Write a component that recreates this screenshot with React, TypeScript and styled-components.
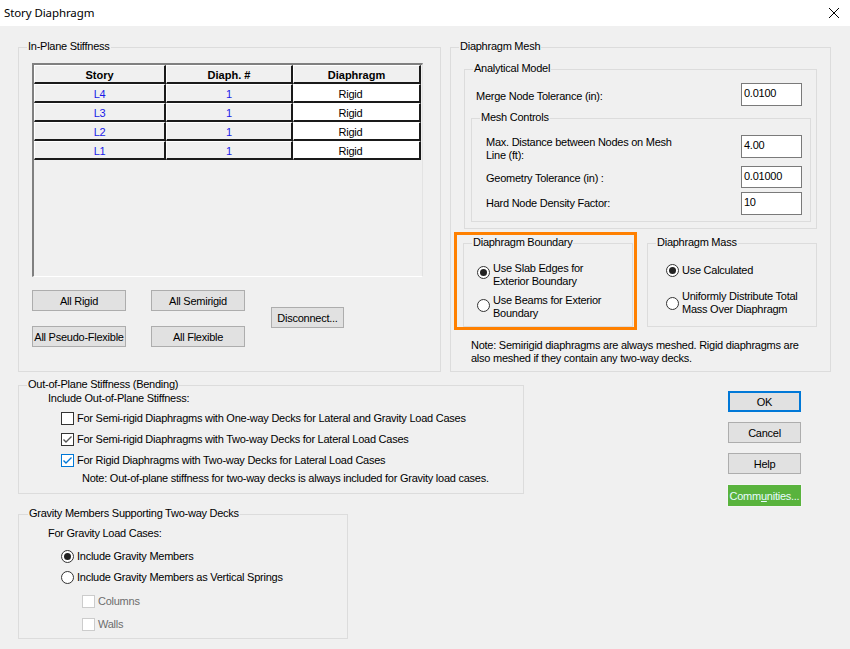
import React from "react";
import styled, { createGlobalStyle } from "styled-components";

const GlobalStyle = createGlobalStyle`
  html, body {
    margin: 0;
    padding: 0;
    background: #f0f0f0;
  }
  body {
    font-family: "Liberation Sans", Arial, sans-serif;
    font-size: 11px;
    letter-spacing: -0.25px;
    color: #000;
  }
`;

const Window = styled.div`
  width: 850px;
  height: 649px;
  background: #f0f0f0;
  overflow: hidden;
  box-sizing: border-box;
`;

const TitleBar = styled.div`
  height: 26px;
  background: #fff;
  display: flex;
  align-items: center;
  justify-content: space-between;
  padding: 0 10px 0 4px;
`;

const Title = styled.span`
  font-family: "Noto Sans", "Open Sans", sans-serif;
  font-size: 11.5px;
  letter-spacing: -0.1px;
  margin-top: -1px;
`;

const CloseIcon = styled.svg`
  width: 12px;
  height: 12px;
`;

const Body = styled.div`
  padding-left: 18px;
`;

const TopRow = styled.div`
  display: flex;
  gap: 9px;
  margin-top: 21px;
`;

const Group = styled.div<{ $w: number; $h: number }>`
  position: relative;
  width: ${(p) => p.$w}px;
  height: ${(p) => p.$h}px;
  border: 1px solid #dcdcdc;
  box-sizing: border-box;
  flex-shrink: 0;
`;

const Legend = styled.span<{ $left?: number }>`
  position: absolute;
  top: -8px;
  left: ${(p) => p.$left ?? 8}px;
  padding: 0 1px;
  background: #f0f0f0;
  line-height: 13px;
  white-space: nowrap;
`;

/* ---------- grid ---------- */

const Grid = styled.div`
  margin: 15px 0 0 13px;
  width: 391px;
  height: 214px;
  box-sizing: border-box;
  border-left: 2px solid #808080;
  border-top: 2px solid #808080;
  border-right: 1px solid #e3e3e3;
  border-bottom: 1px solid #fff;
`;

const GridRow = styled.div`
  display: grid;
  grid-template-columns: 132px 127px 128px;
  height: 19px;
`;

const Cell = styled.div<{ $kind: "head" | "label" | "value" }>`
  box-sizing: border-box;
  display: flex;
  align-items: center;
  justify-content: center;
  border-top: 1px solid #fff;
  border-left: 1px solid #fff;
  border-right: 2px solid #1a1a1a;
  border-bottom: 2px solid #1a1a1a;
  background: ${(p) => (p.$kind === "value" ? "#fff" : "#f0f0f0")};
  color: ${(p) => (p.$kind === "label" ? "#1a1ae8" : "#000")};
  font-weight: ${(p) => (p.$kind === "head" ? "bold" : "normal")};
  letter-spacing: ${(p) => (p.$kind === "head" ? "0" : "-0.25px")};
  padding-right: ${(p) => (p.$kind === "value" ? "12px" : "0")};
  padding-top: 1px;
`;

const ButtonArea = styled.div`
  display: flex;
  margin: 13px 0 0 13px;
`;

const ButtonColumn = styled.div<{ $ml?: number; $mt?: number }>`
  display: flex;
  flex-direction: column;
  gap: 15px;
  margin-left: ${(p) => p.$ml ?? 0}px;
  margin-top: ${(p) => p.$mt ?? 0}px;
`;

const Button = styled.button<{ $w: number; $h?: number; $variant?: "default" | "green" }>`
  width: ${(p) => p.$w}px;
  height: ${(p) => p.$h ?? 21}px;
  box-sizing: border-box;
  padding: 0;
  font-family: "Liberation Sans", Arial, sans-serif;
  font-size: 11px;
  letter-spacing: -0.25px;
  color: ${(p) => (p.$variant === "green" ? "#e8fbff" : "#000")};
  background: ${(p) => (p.$variant === "green" ? "#59b33d" : "#e1e1e1")};
  border: ${(p) =>
    p.$variant === "green" ? "1px solid #f4f4f4" : "1px solid #adadad"};
  white-space: nowrap;
  overflow: hidden;
`;

const DefaultButton = styled(Button)`
  border: 2px solid #0078d7;
`;

/* ---------- mesh ---------- */

const SubGroup = styled(Group)<{ $ml: number; $mt: number }>`
  margin-left: ${(p) => p.$ml}px;
  margin-top: ${(p) => p.$mt}px;
`;

const FieldRow = styled.div<{ $mt: number; $align?: string; $h?: number }>`
  display: flex;
  align-items: ${(p) => p.$align ?? "center"};
  margin-top: ${(p) => p.$mt}px;
  height: ${(p) => (p.$h ? `${p.$h}px` : "auto")};
`;

const FieldLabel = styled.div<{ $w: number; $pl: number; $pt?: number }>`
  width: ${(p) => p.$w}px;
  padding-left: ${(p) => p.$pl}px;
  padding-top: ${(p) => p.$pt ?? 0}px;
  line-height: 13px;
  box-sizing: content-box;
`;

const TextInput = styled.div<{ $h?: number }>`
  width: 61px;
  height: ${(p) => p.$h ?? 23}px;
  box-sizing: border-box;
  border: 1px solid #7a7a7a;
  background: #fff;
  padding: 3px 0 0 2px;
  line-height: 13px;
`;

const BoundaryRow = styled.div`
  display: flex;
  align-items: flex-start;
  margin: 3px 0 0 3px;
`;

const Highlight = styled.div`
  width: 183px;
  height: 98px;
  box-sizing: border-box;
  border: 3px solid #ff8000;
  padding: 8px 0 0 6px;
`;

const OptionList = styled.div<{ $pl: number; $pt: number; $gap: number }>`
  display: flex;
  flex-direction: column;
  gap: ${(p) => p.$gap}px;
  padding-left: ${(p) => p.$pl}px;
  padding-top: ${(p) => p.$pt}px;
`;

const Option = styled.div<{ $center?: boolean; $h?: number }>`
  display: flex;
  align-items: ${(p) => (p.$center ? "center" : "flex-start")};
  height: ${(p) => (p.$h ? `${p.$h}px` : "auto")};
  line-height: 13px;
  white-space: nowrap;
`;

const Radio = styled.span<{ $checked?: boolean; $mt?: number }>`
  position: relative;
  width: 13px;
  height: 13px;
  flex-shrink: 0;
  box-sizing: border-box;
  border: 1px solid #333;
  border-radius: 50%;
  background: #fff;
  margin-top: ${(p) => p.$mt ?? 0}px;
  margin-right: 3px;
  &::after {
    content: "";
    display: ${(p) => (p.$checked ? "block" : "none")};
    position: absolute;
    left: 2px;
    top: 2px;
    width: 7px;
    height: 7px;
    border-radius: 50%;
    background: #222;
  }
`;

const Box = styled.span<{ $state?: "off" | "gray" | "blue" | "disabled" }>`
  width: 13px;
  height: 13px;
  flex-shrink: 0;
  box-sizing: border-box;
  border: 1px solid
    ${(p) =>
      p.$state === "blue" ? "#0078d7" : p.$state === "disabled" ? "#cccccc" : "#333"};
  background: #fff;
  margin-right: 3px;
  display: flex;
  align-items: center;
  justify-content: center;
`;

const Note = styled.div<{ $ml: number; $mt: number }>`
  margin-left: ${(p) => p.$ml}px;
  margin-top: ${(p) => p.$mt}px;
  line-height: 13px;
`;

const Disabled = styled.span`
  color: #6d6d6d;
`;

/* ---------- bottom ---------- */

const BottomArea = styled.div`
  display: flex;
  align-items: flex-start;
  margin-top: 13px;
`;

const LeftColumn = styled.div`
  display: flex;
  flex-direction: column;
  gap: 20px;
`;

const GroupBody = styled.div<{ $pl: number; $pt: number }>`
  padding-left: ${(p) => p.$pl}px;
  padding-top: ${(p) => p.$pt}px;
  line-height: 13px;
`;

const Indent = styled.div<{ $pl: number; $mt?: number }>`
  padding-left: ${(p) => p.$pl}px;
  margin-top: ${(p) => p.$mt ?? 0}px;
`;

const DialogButtons = styled.div`
  display: flex;
  flex-direction: column;
  gap: 10px;
  margin-left: 204px;
  margin-top: 6px;
`;

const Check = ({ color }: { color: string }) => (
  <svg width="11" height="11" viewBox="0 0 11 11">
    <path d="M1.5 5.5 L4 8 L9.5 2.5" stroke={color} strokeWidth="1.4" fill="none" />
  </svg>
);

const stories = ["L4", "L3", "L2", "L1"];

const App = () => {
  return (
    <>
      <GlobalStyle />
      <Window>
        <TitleBar>
          <Title>Story Diaphragm</Title>
          <CloseIcon viewBox="0 0 12 12">
            <path d="M1 1 L11 11 M11 1 L1 11" stroke="#000" strokeWidth="1" />
          </CloseIcon>
        </TitleBar>

        <Body>
          <TopRow>
            <Group $w={423} $h={325}>
              <Legend>In-Plane Stiffness</Legend>
              <Grid>
                <GridRow>
                  <Cell $kind="head">Story</Cell>
                  <Cell $kind="head">Diaph. #</Cell>
                  <Cell $kind="head">Diaphragm</Cell>
                </GridRow>
                {stories.map((s) => (
                  <GridRow key={s}>
                    <Cell $kind="label">{s}</Cell>
                    <Cell $kind="label">1</Cell>
                    <Cell $kind="value">Rigid</Cell>
                  </GridRow>
                ))}
              </Grid>
              <ButtonArea>
                <ButtonColumn>
                  <Button $w={94}>All Rigid</Button>
                  <Button $w={94}>All Pseudo-Flexible</Button>
                </ButtonColumn>
                <ButtonColumn $ml={25}>
                  <Button $w={94}>All Semirigid</Button>
                  <Button $w={94}>All Flexible</Button>
                </ButtonColumn>
                <ButtonColumn $ml={26} $mt={17}>
                  <Button $w={73}>Disconnect...</Button>
                </ButtonColumn>
              </ButtonArea>
            </Group>

            <Group $w={381} $h={325}>
              <Legend>Diaphragm Mesh</Legend>
              <SubGroup $w={353} $h={160} $ml={13} $mt={21}>
                <Legend>Analytical Model</Legend>
                <FieldRow $mt={13}>
                  <FieldLabel $w={265} $pl={11} $pt={3}>
                    Merge Node Tolerance (in):
                  </FieldLabel>
                  <TextInput>0.0100</TextInput>
                </FieldRow>
                <SubGroup $w={340} $h={104} $ml={6} $mt={12}>
                  <Legend>Mesh Controls</Legend>
                  <FieldRow $mt={16} $align="flex-start" $h={23}>
                    <FieldLabel $w={255} $pl={14} $pt={1}>
                      Max. Distance between Nodes on Mesh
                      <br />
                      Line (ft):
                    </FieldLabel>
                    <TextInput>4.00</TextInput>
                  </FieldRow>
                  <FieldRow $mt={8}>
                    <FieldLabel $w={255} $pl={14} $pt={2}>
                      Geometry Tolerance (in) :
                    </FieldLabel>
                    <TextInput $h={22}>0.01000</TextInput>
                  </FieldRow>
                  <FieldRow $mt={4}>
                    <FieldLabel $w={255} $pl={14}>
                      Hard Node Density Factor:
                    </FieldLabel>
                    <TextInput>10</TextInput>
                  </FieldRow>
                </SubGroup>
              </SubGroup>

              <BoundaryRow>
                <Highlight>
                  <Group $w={170} $h={84}>
                    <Legend>Diaphragm Boundary</Legend>
                    <OptionList $pl={13} $pt={18} $gap={6}>
                      <Option>
                        <Radio $checked $mt={4} />
                        <span>
                          Use Slab Edges for
                          <br />
                          Exterior Boundary
                        </span>
                      </Option>
                      <Option>
                        <Radio $mt={5} />
                        <span>
                          Use Beams for Exterior
                          <br />
                          Boundary
                        </span>
                      </Option>
                    </OptionList>
                  </Group>
                </Highlight>
                <SubGroup $w={170} $h={84} $ml={10} $mt={11}>
                  <Legend>Diaphragm Mass</Legend>
                  <OptionList $pl={18} $pt={20} $gap={13}>
                    <Option $center>
                      <Radio $checked />
                      <span>Use Calculated</span>
                    </Option>
                    <Option $center>
                      <Radio />
                      <span>
                        Uniformly Distribute Total
                        <br />
                        Mass Over Diaphragm
                      </span>
                    </Option>
                  </OptionList>
                </SubGroup>
              </BoundaryRow>

              <Note $ml={20} $mt={9}>
                Note: Semirigid diaphragms are always meshed. Rigid diaphragms are
                <br />
                also meshed if they contain any two-way decks.
              </Note>
            </Group>
          </TopRow>

          <BottomArea>
            <LeftColumn>
              <Group $w={506} $h={109}>
                <Legend>Out-of-Plane Stiffness (Bending)</Legend>
                <GroupBody $pl={29} $pt={6}>
                  <div>Include Out-of-Plane Stiffness:</div>
                  <Indent $pl={13} $mt={3}>
                    <Option $center $h={21}>
                      <Box $state="off" />
                      <span>
                        For Semi-rigid Diaphragms with One-way Decks for Lateral and
                        Gravity Load Cases
                      </span>
                    </Option>
                    <Option $center $h={21}>
                      <Box $state="gray">
                        <Check color="#555" />
                      </Box>
                      <span>For Semi-rigid Diaphragms with Two-way Decks for Lateral Load Cases</span>
                    </Option>
                    <Option $center $h={21}>
                      <Box $state="blue">
                        <Check color="#0078d7" />
                      </Box>
                      <span>For Rigid Diaphragms with Two-way Decks for Lateral Load Cases</span>
                    </Option>
                  </Indent>
                  <Indent $pl={34} $mt={1}>
                    Note: Out-of-plane stiffness for two-way decks is always included for
                    Gravity load cases.
                  </Indent>
                </GroupBody>
              </Group>

              <Group $w={330} $h={125}>
                <Legend $left={9}>Gravity Members Supporting Two-way Decks</Legend>
                <GroupBody $pl={29} $pt={12}>
                  <div>For Gravity Load Cases:</div>
                  <Indent $pl={13} $mt={6}>
                    <Option $center $h={21}>
                      <Radio $checked />
                      <span>Include Gravity Members</span>
                    </Option>
                    <Option $center $h={21}>
                      <Radio />
                      <span>Include Gravity Members as Vertical Springs</span>
                    </Option>
                  </Indent>
                  <Indent $pl={34} $mt={2}>
                    <Option $center $h={23}>
                      <Box $state="disabled" />
                      <Disabled>Columns</Disabled>
                    </Option>
                    <Option $center $h={23}>
                      <Box $state="disabled" />
                      <Disabled>Walls</Disabled>
                    </Option>
                  </Indent>
                </GroupBody>
              </Group>
            </LeftColumn>

            <DialogButtons>
              <DefaultButton $w={73} $h={21}>
                OK
              </DefaultButton>
              <Button $w={73}>Cancel</Button>
              <Button $w={73}>Help</Button>
              <Button $w={75} $h={23} $variant="green" style={{ marginLeft: -1 }}>
                Comm<u>u</u>nities...
              </Button>
            </DialogButtons>
          </BottomArea>
        </Body>
      </Window>
    </>
  );
};

export default App;
